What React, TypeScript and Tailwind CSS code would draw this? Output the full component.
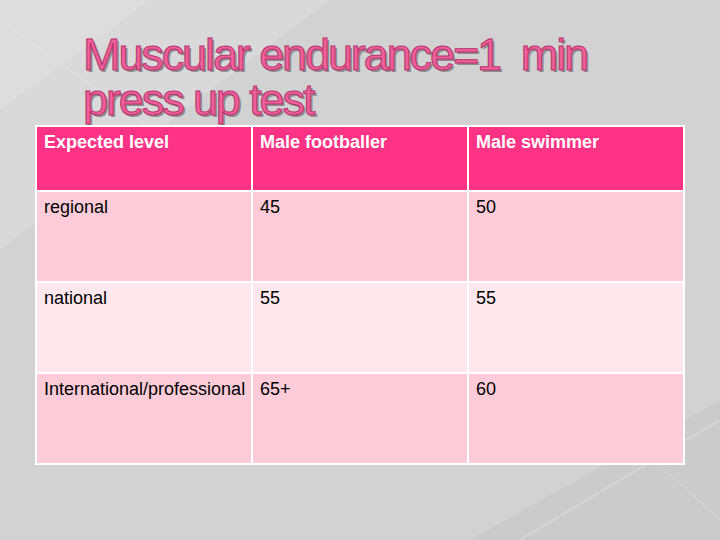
import React from 'react';

const rows = [
  { level: 'regional', football: '45', swim: '50', bg: 'bg-[#fdccd8]' },
  { level: 'national', football: '55', swim: '55', bg: 'bg-[#fee8ee]' },
  { level: 'International/professional', football: '65+', swim: '60', bg: 'bg-[#fdccd8]' },
];

const Background: React.FC = () => (
  <svg className="absolute inset-0 h-full w-full" viewBox="0 0 720 540" preserveAspectRatio="none">
    <polygon points="0,0 330,0 0,250" fill="#d9d9d9" />
    <polygon points="0,0 150,0 0,110" fill="#dddddd" />
    <line x1="0" y1="20" x2="250" y2="200" stroke="#e2e2e2" strokeWidth="1" />
    <polygon points="720,540 720,400 470,540" fill="#cbcbcb" />
    <line x1="720" y1="420" x2="520" y2="540" stroke="#e0e0e0" strokeWidth="1" />
    <line x1="610" y1="420" x2="720" y2="520" stroke="#d8d8d8" strokeWidth="1" />
  </svg>
);

const App: React.FC = () => {
  return (
    <div className="relative w-[720px] h-[540px] overflow-hidden bg-[#d2d2d2] font-['Liberation_Sans',Arial,sans-serif]">
      <Background />
      <div className="relative flex flex-col pt-[32px]">
        <h1 className="ml-[83px] text-[45px] leading-[45px] tracking-[-2.1px] text-[#f0609a] [-webkit-text-stroke:1px_#b8326c] [text-shadow:2px_2px_0_#8c8c8c]">
          Muscular endurance=1&nbsp; min
          <br />
          press up test
        </h1>
        <table className="ml-[35px] mt-[3px] w-[650px] border-collapse border-2 border-white text-[18px] leading-[20px] table-fixed">
          <thead>
            <tr className="h-[65px] bg-[#ff3385]">
              <th className="w-[216px] border-2 border-white px-[7px] pt-[5px] align-top text-left font-bold text-white">Expected level</th>
              <th className="w-[216px] border-2 border-white px-[7px] pt-[5px] align-top text-left font-bold text-white">Male footballer</th>
              <th className="border-2 border-white px-[7px] pt-[5px] align-top text-left font-bold text-white">Male swimmer</th>
            </tr>
          </thead>
          <tbody>
            {rows.map((r) => (
              <tr key={r.level} className={`h-[91px] ${r.bg}`}>
                <td className="border-2 border-white px-[7px] pt-[5px] align-top text-black">{r.level}</td>
                <td className="border-2 border-white px-[7px] pt-[5px] align-top text-black">{r.football}</td>
                <td className="border-2 border-white px-[7px] pt-[5px] align-top text-black">{r.swim}</td>
              </tr>
            ))}
          </tbody>
        </table>
      </div>
    </div>
  );
};

export default App;
